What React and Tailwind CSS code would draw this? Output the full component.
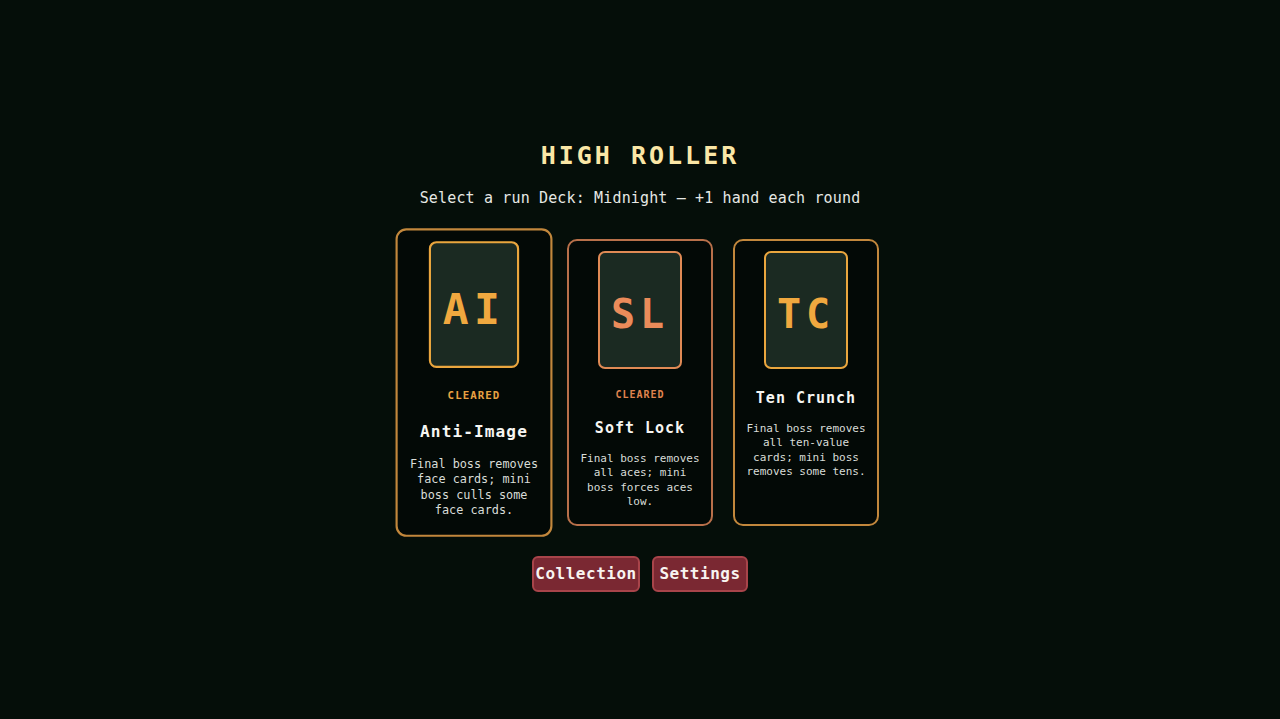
const decks = [
  {
    id: "anti-image",
    code: "AI",
    name: "Anti-Image",
    desc: "Final boss removes face cards; mini boss culls some face cards.",
    cleared: true,
    tone: "gold",
    selected: true,
  },
  {
    id: "soft-lock",
    code: "SL",
    name: "Soft Lock",
    desc: "Final boss removes all aces; mini boss forces aces low.",
    cleared: true,
    tone: "copper",
  },
  {
    id: "ten-crunch",
    code: "TC",
    name: "Ten Crunch",
    desc: "Final boss removes all ten-value cards; mini boss removes some tens.",
    cleared: false,
    tone: "gold",
  },
];

const tones = {
  gold: {
    card: "border-[#c2873c]",
    art: "border-[#eaa63e]",
    letters: "text-[#f0a83f]",
    cleared: "text-[#e8a142]",
  },
  copper: {
    card: "border-[#b8704a]",
    art: "border-[#e08a55]",
    letters: "text-[#ea8b5a]",
    cleared: "text-[#e0844f]",
  },
};

const DeckCard = ({ deck }) => {
  const t = tones[deck.tone];
  return (
    <div
      className={`w-[146px] flex flex-col items-center rounded-[10px] border-2 bg-[#030906] px-[10px] pt-[10px] pb-[14px] ${t.card} ${
        deck.selected ? "scale-[1.075]" : ""
      }`}
    >
      {/* art */}
      <div
        className={`w-[84px] h-[118px] shrink-0 flex items-center justify-center rounded-[7px] border-2 bg-[#1b2a22] ${t.art}`}
      >
        <span
          className={`text-[40px] leading-none font-bold tracking-[5px] mt-2 ${t.letters}`}
        >
          {deck.code}
        </span>
      </div>

      {deck.cleared && (
        <div
          className={`mt-[20px] text-[10px] leading-[12px] font-bold tracking-[1px] ${t.cleared}`}
        >
          CLEARED
        </div>
      )}

      <div
        className={`${deck.cleared ? "mt-[18px]" : "mt-[20px]"} text-[15px] leading-[18px] font-bold tracking-[1px] text-[#f6f6f2]`}
      >
        {deck.name}
      </div>

      <p className="mt-[15px] text-[11px] leading-[14.4px] text-center text-[#d9ddd8]">
        {deck.desc}
      </p>
    </div>
  );
};

export default function App() {
  return (
    <div
      className="min-h-screen w-full bg-[#050e09] flex flex-col items-center pt-[140px]"
      style={{ fontFamily: '"DejaVu Sans Mono", "Liberation Mono", monospace' }}
    >
      <h1 className="text-[25px] leading-[32px] font-bold tracking-[3px] text-[#fbe7a6]">
        HIGH ROLLER
      </h1>
      <div className="mt-[16px] text-[15px] leading-[20px] tracking-[0.15px] text-[#e6e8e4]">
        Select a run Deck: Midnight – +1 hand each round
      </div>

      <div className="mt-[31px] flex items-stretch gap-5">
        {decks.map((d) => (
          <DeckCard key={d.id} deck={d} />
        ))}
      </div>

      <div className="mt-[30px] flex gap-3">
        <button className="w-[108px] h-[36px] flex items-center justify-center whitespace-nowrap rounded-[6px] border-2 border-[#a8444a] bg-[#7a2832] text-[16px] font-bold tracking-[0.5px] text-[#f8f4f0]">
          Collection
        </button>
        <button className="w-[96px] h-[36px] flex items-center justify-center whitespace-nowrap rounded-[6px] border-2 border-[#a8444a] bg-[#7a2832] text-[16px] font-bold tracking-[0.5px] text-[#f8f4f0]">
          Settings
        </button>
      </div>
    </div>
  );
}
